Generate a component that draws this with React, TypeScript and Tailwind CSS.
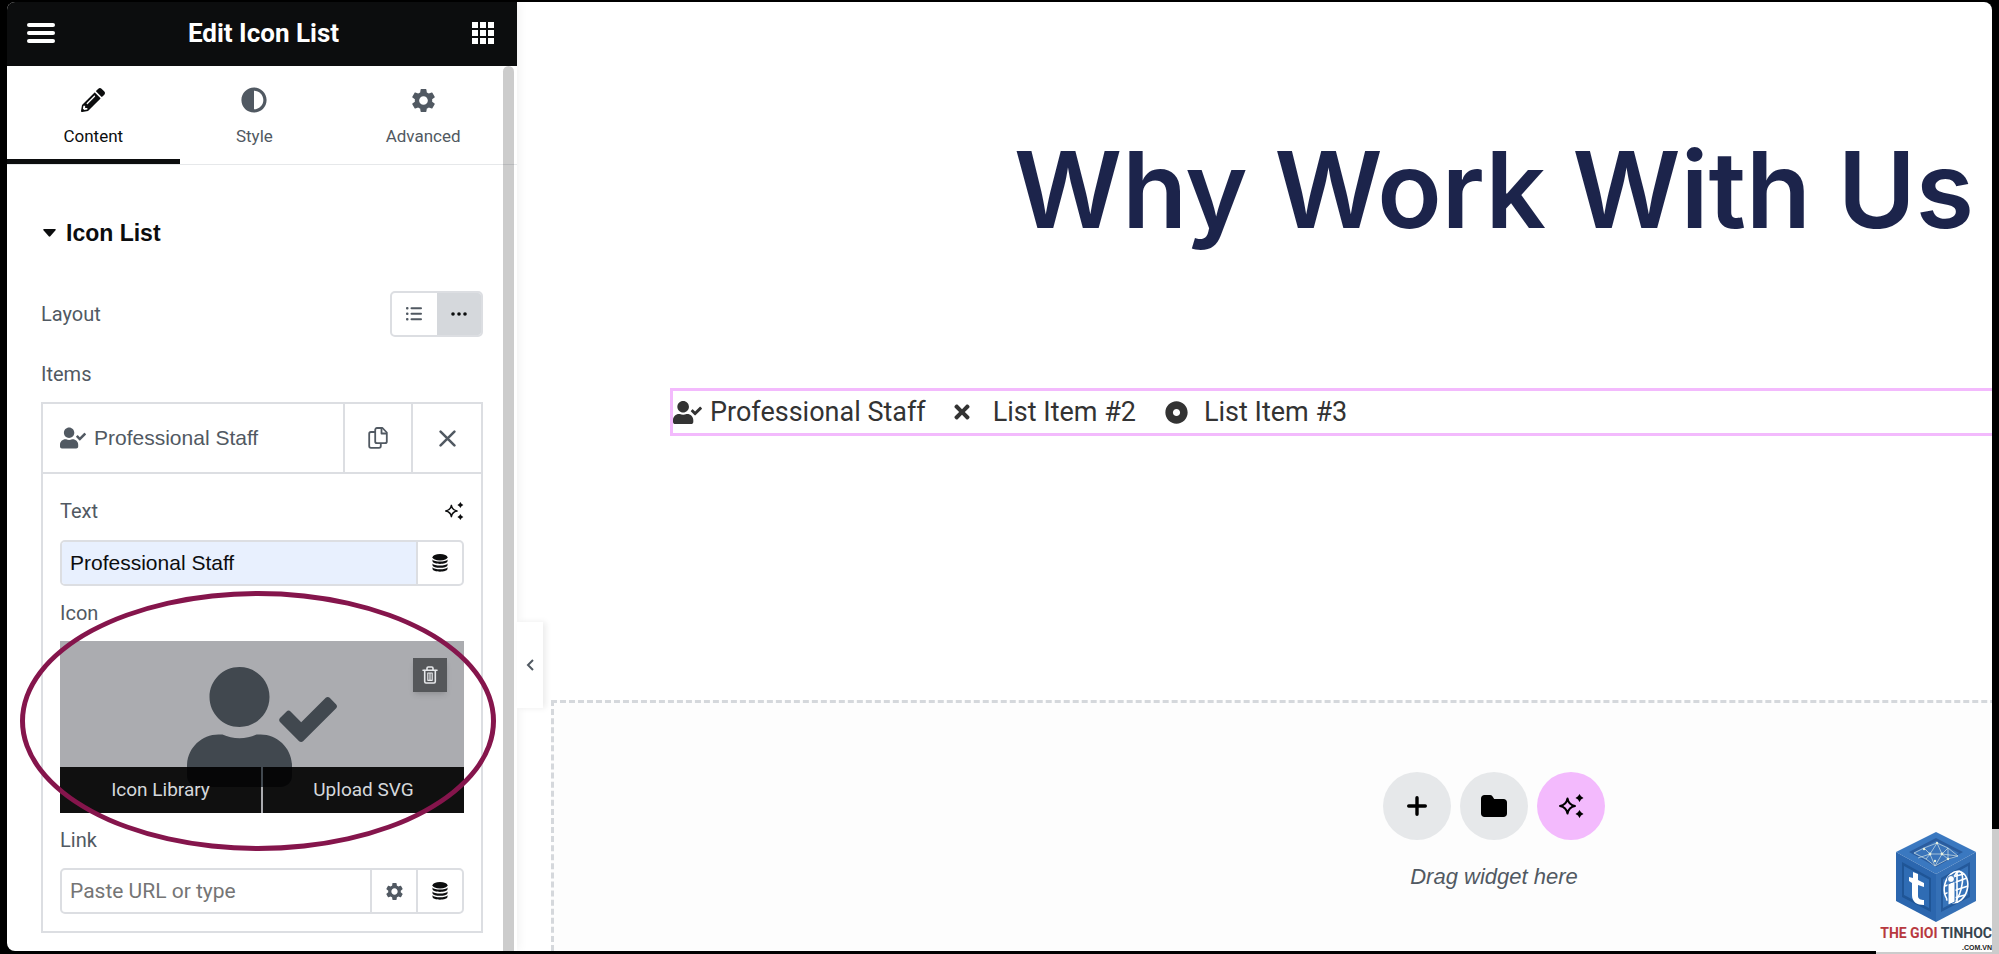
import React, { useState } from 'react';
import { FaUserCheck, FaTimes, FaDotCircle, FaPencilAlt, FaAdjust } from 'react-icons/fa';
import { MdSettings } from 'react-icons/md';

type IconProps = { className?: string };

const MenuIcon: React.FC<IconProps> = ({ className }) => (
  <svg viewBox="0 0 28 20" className={className} fill="currentColor">
    <rect width="28" height="4" rx="2" />
    <rect y="8" width="28" height="4" rx="2" />
    <rect y="16" width="28" height="4" rx="2" />
  </svg>
);

const GridIcon: React.FC<IconProps> = ({ className }) => (
  <svg viewBox="0 0 22 22" className={className} fill="currentColor">
    {[0, 8, 16].map((y) => [0, 8, 16].map((x) => <rect key={`${x}-${y}`} x={x} y={y} width="6" height="6" />))}
  </svg>
);

const SparkleIcon: React.FC<IconProps> = ({ className }) => (
  <svg viewBox="0 0 26 24" className={className} fill="currentColor">
    <path
      d="M9.5 4.5C10.3 9 12.500 11.200 17 12C12.500 12.800 10.300 15 9.500 19.500C8.700 15 6.500 12.800 2 12C6.500 11.200 8.700 9 9.500 4.500Z"
      fill="none"
      stroke="currentColor"
      strokeWidth="2"
      strokeLinejoin="round"
    />
    <path d="M21.500 0L23 2.300L25.500 4L23 5.500L21.500 8L20 5.500L17.500 4L20 2.300Z" />
    <path d="M21.500 16L23 18.300L25.500 20L23 21.500L21.500 24L20 21.500L17.500 20L20 18.300Z" />
  </svg>
);

const DatabaseIcon: React.FC<IconProps> = ({ className }) => (
  <svg viewBox="0 0 16 18" className={className} fill="currentColor">
    <ellipse cx="8" cy="3.200" rx="7.500" ry="3.200" />
    <path d="M.5 5.500C2 8.200 14 8.200 15.500 5.500V7.300C15 10.800 1 10.800 .5 7.300Z" />
    <path d="M.5 9.400C2 12.100 14 12.100 15.500 9.400V11.200C15 14.700 1 14.700 .5 11.200Z" />
    <path d="M.5 13.300C2 16 14 16 15.500 13.300V15.100C15 18.600 1 18.600 .5 15.100Z" />
  </svg>
);

const ListIcon: React.FC<IconProps> = ({ className }) => (
  <svg viewBox="0 0 16 14" className={className} fill="currentColor">
    {[0, 5.5, 11].map((y) => (
      <g key={y}>
        <rect y={y} width="2.500" height="2.500" rx="1" />
        <rect x="4.500" y={y + 0.25} width="11.500" height="2" rx="1" />
      </g>
    ))}
  </svg>
);

const DotsIcon: React.FC<IconProps> = ({ className }) => (
  <svg viewBox="0 0 16 4" className={className} fill="currentColor">
    <circle cx="2" cy="2" r="1.800" />
    <circle cx="8" cy="2" r="1.800" />
    <circle cx="14" cy="2" r="1.800" />
  </svg>
);

const CopyIcon: React.FC<IconProps> = ({ className }) => (
  <svg viewBox="0 0 20 22" className={className} fill="none" stroke="currentColor" strokeWidth="1.800" strokeLinejoin="round">
    <path d="M9 1H14.500L18.800 5.500V14.500C18.800 15.500 18.200 16.200 17 16.200H9C7.800 16.200 7.200 15.500 7.200 14.500V3C7.200 1.700 7.900 1 9 1Z" />
    <path d="M13.500 1.500V6.500H18.500" />
    <path d="M7 5H3C1.800 5 1.200 5.700 1.200 6.800V19C1.200 20.200 1.800 20.900 3 20.900H11C12.200 20.900 12.800 20.200 12.800 19V16.500" />
  </svg>
);

const CloseIcon: React.FC<IconProps> = ({ className }) => (
  <svg viewBox="0 0 16 16" className={className} fill="none" stroke="currentColor" strokeWidth="2.400" strokeLinecap="round">
    <path d="M1.500 1.500L14.500 14.500M14.500 1.500L1.500 14.500" />
  </svg>
);

const TrashIcon: React.FC<IconProps> = ({ className }) => (
  <svg viewBox="0 0 16 18" className={className} fill="none" stroke="currentColor" strokeWidth="1.600" strokeLinecap="round" strokeLinejoin="round">
    <path d="M1 4.200H15M5 4V2.200C5 1.400 5.500 1 6.200 1H9.800C10.500 1 11 1.400 11 2.200V4" />
    <path d="M2.700 4.500V15.500C2.700 16.500 3.200 17 4 17H12C12.800 17 13.300 16.500 13.300 15.500V4.500" />
    <path d="M5.800 7V14.300H10.200V7ZM8 7V14.300" strokeWidth="1.200" />
  </svg>
);

const FolderIcon: React.FC<IconProps> = ({ className }) => (
  <svg viewBox="0 0 26 22" className={className} fill="currentColor">
    <path d="M3.500 0H9C10 0 10.800 .4 11.400 1.200L13.200 4H22.500C24.500 4 26 5.500 26 7.500V18.500C26 20.500 24.500 22 22.500 22H3.500C1.500 22 0 20.500 0 18.500V3.500C0 1.500 1.500 0 3.500 0Z" />
  </svg>
);

const PlusIcon: React.FC<IconProps> = ({ className }) => (
  <svg viewBox="0 0 20 20" className={className} fill="none" stroke="currentColor" strokeWidth="3.400" strokeLinecap="round">
    <path d="M10 1.700V18.300M1.700 10H18.300" />
  </svg>
);

const ChevronIcon: React.FC<IconProps> = ({ className }) => (
  <svg viewBox="0 0 8 12" className={className} fill="none" stroke="currentColor" strokeWidth="2">
    <path d="M7 1L2 6L7 11" />
  </svg>
);

const CubeLogo: React.FC<IconProps> = ({ className }) => (
  <svg viewBox="0 0 80 90" className={className}>
    <path d="M40 0L80 20L40 42L0 20Z" fill="#3a78c0" />
    <path d="M0 20L40 42V90L0 69Z" fill="#2b66ae" />
    <path d="M80 20L40 42V90L80 69Z" fill="#3570b6" />
    <path d="M40 6L67 20L40 35L13 20Z" fill="#2a5c9e" />
    <path d="M40 9L63 21L40 33L17 21Z" fill="#3a74ba" />
    <path d="M6 30L35 46V80L6 65Z" fill="#1f5596" />
    <path d="M8 34L33 47.500V76L8 63Z" fill="#2f6cb4" />
    <path d="M74 30L45 46V80L74 65Z" fill="#24599b" />
    <path d="M72 34L47 47.500V76L72 63Z" fill="#3874ba" />
    <path d="M18 21L28 16L41 11L52 16L62 24L52 27L39 34L30 27L18 21M28 16L34 22L41 11L46 22L52 16M34 22L46 22L62 24M30 27L34 22L39 34L46 22L52 27L52 16M22 26L34 22" fill="none" stroke="#cfe0e4" strokeWidth=".7" />
    <g fill="#e9f0dc">
      <circle cx="41" cy="11" r="1.200" />
      <circle cx="28" cy="17" r="1.200" />
      <circle cx="34" cy="22" r="1.400" />
      <circle cx="46" cy="22" r="1.400" />
      <circle cx="52" cy="27" r="1.200" />
      <circle cx="39" cy="29" r="1.200" />
    </g>
    <path d="M17 40L22 42V48L28 51V55L22 53V64C22 67 25 68 28 68V73C21 73 16 70 16 63V51L13 49V45L17 46Z" fill="#fff" />
    <g fill="none" stroke="#fff" strokeWidth="1.600">
      <ellipse cx="60" cy="55" rx="11.500" ry="16" transform="rotate(14 60 55)" />
      <ellipse cx="60" cy="55" rx="5.500" ry="16" transform="rotate(14 60 55)" />
      <path d="M49 54L71 46M48 62L72 54M50 68L69 63M52 46L68 42M61 39V71" />
    </g>
    <path d="M52 52L59 49V70L52 73Z" fill="#fff" stroke="#2f6cb4" />
    <circle cx="55" cy="47" r="3.500" fill="#fff" stroke="#2f6cb4" />
  </svg>
);

const TABS = [
  { id: 'content', label: 'Content', icon: <FaPencilAlt size={24} /> },
  { id: 'style', label: 'Style', icon: <FaAdjust size={26} /> },
  { id: 'advanced', label: 'Advanced', icon: <MdSettings size={29} /> },
];

const Panel: React.FC = () => {
  const [tab, setTab] = useState('content');
  const [text, setText] = useState('Professional Staff');
  const [url, setUrl] = useState('');

  return (
    <aside className="relative z-10 flex w-[510px] shrink-0 flex-col rounded-l-lg bg-white text-xl leading-6 text-[#515962] shadow-[0_0_12px_rgba(0,0,0,0.08)]">
      <header className="flex h-16 shrink-0 items-center justify-between rounded-tl-lg bg-[#0c0d0e] pr-[23px] pb-0.5 pl-5 text-white">
        <button type="button" aria-label="Menu">
          <MenuIcon className="h-5 w-7" />
        </button>
        <h1 className="text-[26px] font-bold">Edit Icon List</h1>
        <button type="button" aria-label="Widgets">
          <GridIcon className="h-[22px] w-[22px]" />
        </button>
      </header>

      <nav className="flex h-[99px] shrink-0 border-b border-[#e6e8ea]">
        {TABS.map((t) => (
          <button
            key={t.id}
            type="button"
            onClick={() => setTab(t.id)}
            className={`flex flex-auto flex-col items-center border-b-[5px] pt-5 text-[17px] ${
              tab === t.id ? 'border-[#0c0d0e] text-[#0c0d0e]' : 'border-transparent'
            }`}
          >
            <span className="flex h-7 items-center">{t.icon}</span>
            <span className="mt-2.5">{t.label}</span>
          </button>
        ))}
      </nav>

      <div className="flex flex-col px-[34px]">
        <button type="button" className="mt-14 flex items-center gap-2.5 pl-0.5 font-['Liberation_Sans'] text-[23px] font-bold text-[#0c0d0e]">
          <svg viewBox="0 0 13 8" className="h-2 w-[13px]" fill="currentColor">
            <path d="M1 0H12Q13.500 0 12.500 1.200L7.300 7.300Q6.500 8 5.700 7.300L.5 1.200Q-.5 0 1 0Z" />
          </svg>
          Icon List
        </button>

        <div className="mt-[46px] flex items-center justify-between">
          <span>Layout</span>
          <div className="flex h-[46px] w-[93px] overflow-hidden rounded-[5px] border-2 border-[#dcdee2]">
            <button type="button" aria-label="Default" className="flex flex-1 items-center justify-center">
              <ListIcon className="h-3.5 w-4" />
            </button>
            <button type="button" aria-label="Inline" className="flex flex-1 items-center justify-center bg-[#d5d8dc] text-[#0c0d0e]">
              <DotsIcon className="h-1 w-4" />
            </button>
          </div>
        </div>

        <span className="mt-[25px]">Items</span>

        <div className="mt-4 border-2 border-[#dcdee2]">
          <div className="flex h-[70px] divide-x-2 divide-[#dcdee2] border-b-2 border-[#dcdee2]">
            <button type="button" className="flex flex-1 items-center gap-2 pl-[17px] font-['Liberation_Sans'] text-[21px]">
              <FaUserCheck size={26} />
              Professional Staff
            </button>
            <button type="button" aria-label="Duplicate" className="flex w-[68px] items-center justify-center">
              <CopyIcon className="h-[22px] w-5" />
            </button>
            <button type="button" aria-label="Remove" className="flex w-[68px] items-center justify-center">
              <CloseIcon className="h-[17px] w-[17px]" />
            </button>
          </div>

          <div className="flex flex-col px-[17px] pt-[25px] pb-[17px]">
            <div className="flex items-center justify-between">
              <label htmlFor="item-text">Text</label>
              <button type="button" aria-label="Edit with AI" className="text-[#0c0d0e]">
                <SparkleIcon className="h-[18px] w-5" />
              </button>
            </div>
            <div className="mt-[17px] flex h-[46px] overflow-hidden rounded-[5px] border-2 border-[#dcdee2]">
              <input
                id="item-text"
                value={text}
                onChange={(e) => setText(e.target.value)}
                className="min-w-0 flex-1 bg-[#e8f0fe] px-2 font-['Liberation_Sans'] text-[21px] text-[#0c0d0e] outline-none"
              />
              <button type="button" aria-label="Dynamic tags" className="flex w-[46px] items-center justify-center border-l-2 border-[#dcdee2] text-[#0c0d0e]">
                <DatabaseIcon className="h-[18px] w-4" />
              </button>
            </div>

            <span className="mt-[15px]">Icon</span>
            <div className="relative mt-4 flex h-[172px] flex-col items-center overflow-hidden bg-[#abacb0] pt-[26px] text-[#41484f]">
              <FaUserCheck className="h-[120px] w-[150px] shrink-0" />
              <button
                type="button"
                aria-label="Delete icon"
                className="absolute top-[17px] right-[17px] flex h-[34px] w-[34px] items-center justify-center bg-[#55575a] text-[#e6e8ea] shadow-md"
              >
                <TrashIcon className="h-[18px] w-4" />
              </button>
              <div className="absolute inset-x-0 bottom-0 flex h-[46px] gap-0.5 text-[19px] text-[#d5d8dc]">
                <button type="button" className="flex-1 bg-[#000000e8]">Icon Library</button>
                <button type="button" className="flex-1 bg-[#000000e8]">Upload SVG</button>
              </div>
            </div>

            <label htmlFor="item-link" className="mt-[15px]">Link</label>
            <div className="mt-4 flex h-[46px] overflow-hidden rounded-[5px] border-2 border-[#dcdee2]">
              <input
                id="item-link"
                value={url}
                placeholder="Paste URL or type"
                onChange={(e) => setUrl(e.target.value)}
                className="min-w-0 flex-1 px-2 text-[21px] outline-none placeholder:text-[#757575]"
              />
              <button type="button" aria-label="Link options" className="flex w-[46px] items-center justify-center border-l-2 border-[#dcdee2]">
                <MdSettings size={21} />
              </button>
              <button type="button" aria-label="Dynamic tags" className="flex w-[46px] items-center justify-center border-l-2 border-[#dcdee2] text-[#0c0d0e]">
                <DatabaseIcon className="h-[18px] w-4" />
              </button>
            </div>
          </div>
        </div>
      </div>

      {/* scroll thumb */}
      <div className="absolute top-16 right-[3px] bottom-0 w-[11px] rounded-t-full bg-black/20" />

      {/* highlight around the icon control */}
      <div className="pointer-events-none absolute top-[589px] right-[21px] left-[13px] h-[260px] rounded-[50%] border-[5px] border-[#85154c]" />

      <button
        type="button"
        aria-label="Collapse panel"
        className="absolute top-[620px] -right-[26px] flex h-[86px] w-[26px] items-center justify-center bg-white shadow-[3px_0_6px_rgba(0,0,0,0.08)]"
      >
        <ChevronIcon className="h-3 w-2" />
      </button>
    </aside>
  );
};

const Preview: React.FC = () => (
  <main className="min-w-0 flex-1 overflow-hidden rounded-r-lg bg-white">
    {/* the page is designed wider than the visible part of the preview */}
    <div className="flex h-full w-[1954px] flex-col">
      <h2 className="pt-32 text-center font-['Inter'] text-[106px] leading-[120px] font-semibold text-[#1c244b]">Why Work With Us</h2>

      <ul className="mx-[153px] mt-[138px] flex items-center border-[3px] border-[#f3bafd] text-[27px] leading-[42px] text-[#333333]">
        <li className="flex items-center gap-2">
          <FaUserCheck size={29} />
          Professional Staff
        </li>
        <li className="ml-[25px] flex items-center gap-5">
          <FaTimes size={22} />
          List Item #2
        </li>
        <li className="ml-[29px] flex items-center gap-4">
          <FaDotCircle size={23} />
          List Item #3
        </li>
      </ul>

      <section className="mx-[34px] mt-[264px] flex flex-1 flex-col items-center border-x-[3px] border-t-[3px] border-dashed border-[#d5d8dc] bg-[#fdfdfd] pt-[69px]">
        <div className="flex gap-[9px] text-black">
          <button type="button" aria-label="Add new container" className="flex h-[68px] w-[68px] items-center justify-center rounded-full bg-[#e6e8ea]">
            <PlusIcon className="h-5 w-5" />
          </button>
          <button type="button" aria-label="Add template" className="flex h-[68px] w-[68px] items-center justify-center rounded-full bg-[#e6e8ea]">
            <FolderIcon className="h-[22px] w-[26px]" />
          </button>
          <button type="button" aria-label="Build with AI" className="flex h-[68px] w-[68px] items-center justify-center rounded-full bg-[#f3bafd]">
            <SparkleIcon className="h-6 w-[26px]" />
          </button>
        </div>
        <p className="mt-[25px] font-['Liberation_Sans'] text-[22px] leading-6 text-[#515962] italic">Drag widget here</p>
      </section>
    </div>
  </main>
);

export default function App() {
  return (
    <div className="relative flex h-screen overflow-hidden bg-black px-[7px] pt-0.5 pb-[3px] font-['Roboto',sans-serif]">
      <Panel />
      <Preview />

      <div className="absolute right-0 bottom-0 h-[125px] w-[7px] bg-[#cccccc]" />
      <div className="absolute right-[7px] bottom-0 flex flex-col items-center border-b-2 border-[#cccccc] bg-[#fdfdfd] pl-1">
        <CubeLogo className="h-[90px] w-20" />
        <div className="text-sm leading-[22px] font-bold whitespace-nowrap">
          <span className="text-[#b8393f]">THE GIOI</span> <span className="text-[#36444f]">TINHOC</span>
        </div>
        <div className="self-end font-['Liberation_Sans'] text-[7px] leading-2 font-bold text-[#222222]">.COM.VN</div>
      </div>
    </div>
  );
}
